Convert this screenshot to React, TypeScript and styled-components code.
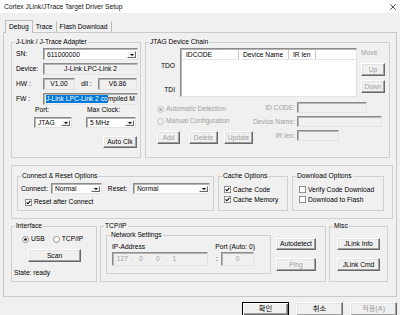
import React from "react";
import styled, { createGlobalStyle, css } from "styled-components";

const FONT = `"Liberation Sans", Arial, sans-serif`;
const KFONT = `"Liberation Sans", "Noto Sans CJK KR", sans-serif`;
const DIS = "#a0a0a0";

const Global = createGlobalStyle`
  html, body { margin: 0; padding: 0; background: #f0f0f0; }
  body { font-family: ${FONT}; font-size: 6.7px; line-height: 8px; color: #000; }
  * { box-sizing: border-box; }
`;

const Window = styled.div`
  width: 400px; height: 315px; overflow: hidden; background: #f0f0f0;
  display: flex; flex-direction: column;
`;
const TitleBar = styled.div`
  height: 13px; flex-shrink: 0; background: #fff;
  display: flex; align-items: center; justify-content: space-between;
  padding: 0 4px 0 4px;
`;
const TitleText = styled.span`white-space: nowrap; color: #111;`;

const TabStrip = styled.div`
  display: flex; align-items: flex-end; height: 13px; flex-shrink: 0;
  margin-top: 7px; margin-bottom: -1px; padding-left: 5px;
  position: relative; z-index: 1;
`;
const Tab = styled.div<{ $active?: boolean }>`
  height: 13px; padding: 0 3px; display: flex; align-items: center; white-space: nowrap;
  ${(p) =>
    p.$active
      ? css`background: #f0f0f0; border: 1px solid #bcbcbc; border-bottom: none;`
      : css`height: 11px; margin-bottom: 1px; border-right: 1px solid #bcbcbc;`}
`;

const Page = styled.div`
  margin: 0 3px; height: 265px; flex-shrink: 0;
  border: 1px solid #c9c9c9;
  padding: 5px 0 0 7px;
  display: flex; flex-direction: column;
`;

const Group = styled.fieldset<{ $w: number; $h: number }>`
  margin: 0; padding: 0; min-width: 0; flex-shrink: 0;
  width: ${(p) => p.$w}px; height: ${(p) => p.$h}px;
  border: 1px solid #d0d0d0;
`;
const Legend = styled.legend`
  margin-left: 3px; padding: 0 1px; height: 8px; line-height: 8px; white-space: nowrap;
`;

const TopRow = styled.div`display: flex; gap: 4px; flex-shrink: 0;`;

const sunken = css`
  border: 1px solid; border-color: #8c8c8c #e3e3e3 #e3e3e3 #8c8c8c;
  box-shadow: inset 1px 1px 0 #b4b4b4;
`;

const Field = styled.div<{ $w: number; $h?: number; $center?: boolean; $white?: boolean; $disabled?: boolean }>`
  width: ${(p) => p.$w}px; height: ${(p) => p.$h ?? 12}px; flex-shrink: 0;
  ${sunken};
  background: ${(p) => (p.$white ? "#fff" : "#f0f0f0")};
  color: ${(p) => (p.$disabled ? DIS : "#000")};
  display: flex; align-items: center;
  justify-content: ${(p) => (p.$center ? "center" : "flex-start")};
  padding: 0 2px; overflow: hidden; white-space: nowrap;
`;

const ComboBox = styled.div<{ $w: number; $h: number }>`
  width: ${(p) => p.$w}px; height: ${(p) => p.$h}px; flex-shrink: 0;
  ${sunken};
  background: #fff; display: flex; align-items: stretch; padding: 2px 1px 1px 2px;
`;
const ComboText = styled.span`flex: 1; overflow: hidden; white-space: nowrap; display: flex; align-items: center; padding-left: 1px;`;
const ComboArrow = styled.span`
  width: 9px; flex-shrink: 0; background: #f0f0f0;
  border: 1px solid; border-color: #fff #696969 #696969 #fff;
  display: flex; align-items: center; justify-content: center;
  &::after {
    content: ""; width: 0; height: 0;
    border-left: 2.5px solid transparent; border-right: 2.5px solid transparent;
    border-top: 2.5px solid #000;
  }
`;

function Combo({ w, h, value }: { w: number; h: number; value: string }) {
  return (
    <ComboBox $w={w} $h={h}>
      <ComboText>{value}</ComboText>
      <ComboArrow />
    </ComboBox>
  );
}

const Btn = styled.button<{ $w: number; $h: number; $mt?: number; $ml?: number; $default?: boolean; $kr?: boolean }>`
  font: inherit; margin: 0; padding: 0; cursor: default; flex-shrink: 0;
  margin-top: ${(p) => p.$mt ?? 0}px; margin-left: ${(p) => p.$ml ?? 0}px;
  width: ${(p) => p.$w}px; height: ${(p) => p.$h}px;
  display: flex; align-items: center; justify-content: center; white-space: nowrap;
  background: #f0f0f0; color: #000;
  border: 1px solid; border-color: #fff #696969 #696969 #fff;
  box-shadow: inset -1px -1px 0 #a0a0a0, inset 1px 1px 0 #e3e3e3;
  ${(p) => p.$kr && css`font-family: ${KFONT}; font-size: 7.3px;`}
  ${(p) =>
    p.$default &&
    css`
      border-color: #000;
      box-shadow: inset 1px 1px 0 #fff, inset -1px -1px 0 #696969, inset -2px -2px 0 #a0a0a0;
    `}
  &:disabled { color: ${DIS}; }
`;

/* Adapter */
const AdapterBody = styled.div`padding: 2px 3px 0 4px; display: flex; flex-direction: column;`;
const FieldRow = styled.div`
  display: flex; align-items: center; height: 12px;
  & + & { margin-top: 3px; }
`;
const RowLabel = styled.span<{ $w?: number; $center?: boolean }>`
  width: ${(p) => p.$w ?? 27}px; flex-shrink: 0; white-space: nowrap;
  text-align: ${(p) => (p.$center ? "center" : "left")};
`;
const Selected = styled.span`background: #0078d7; color: #fff;`;
const ClockRow = styled.div`display: flex; margin-top: 1px; padding-left: 18px;`;
const ClockCol = styled.div<{ $w: number }>`
  display: flex; flex-direction: column; width: ${(p) => p.$w}px;
  & + & { margin-left: 14px; }
`;
const SmallLabel = styled.span`padding-left: 1px; height: 8px; line-height: 8px; margin-bottom: 3px; white-space: nowrap;`;
const RightAlign = styled.div`display: flex; justify-content: flex-end;`;

/* JTAG */
const JtagBody = styled.div`padding-top: 2px; display: flex; flex-direction: column;`;
const ChainRow = styled.div`display: flex; height: 49px;`;
const PinLabels = styled.div`
  width: 34px; padding: 14px 5px 0 0;
  display: flex; flex-direction: column; align-items: flex-end; gap: 16px;
`;
const ListBox = styled.div`
  width: 177px; height: 49px; background: #fff;
  border: 1px solid; border-color: #8c8c8c #e3e3e3 #e3e3e3 #8c8c8c;
  box-shadow: inset 1px 1px 0 #b4b4b4;
  padding: 1px 0 0 1px;
`;
const ListHeader = styled.div`display: flex; height: 10px; border-bottom: 1px solid #e5e5e5;`;
const HeaderCell = styled.div<{ $w: number }>`
  width: ${(p) => p.$w}px; flex-shrink: 0; padding-left: 4px; line-height: 9px;
  border-right: 1px solid #c9c9c9; white-space: nowrap;
`;
const MoveCol = styled.div`width: 24px; margin-left: 4px; padding-top: 1px; display: flex; flex-direction: column;`;
const DimText = styled.span`color: ${DIS}; height: 8px; line-height: 8px; white-space: nowrap;`;
const OptionsRow = styled.div`display: flex;`;
const OptionsLeft = styled.div`width: 107px; flex-shrink: 0; padding: 7px 0 0 11px; display: flex; flex-direction: column; gap: 2px;`;
const ButtonRow = styled.div`display: flex; margin-top: 3px;`;
const FieldsGrid = styled.div`
  display: grid; grid-template-columns: 42px auto; column-gap: 2px; row-gap: 3px;
  padding-top: 5px; align-items: center; justify-items: start; align-content: start;
`;
const GridLabel = styled.span`justify-self: end; color: ${DIS}; white-space: nowrap;`;

/* Radio / Check */
const Choice = styled.div<{ $disabled?: boolean; $h?: number; $ml?: number }>`
  display: flex; align-items: center; gap: 2px; height: ${(p) => p.$h ?? 10}px;
  margin-left: ${(p) => p.$ml ?? 0}px;
  color: ${(p) => (p.$disabled ? DIS : "#000")}; white-space: nowrap;
`;
function RadioIcon({ on, disabled }: { on?: boolean; disabled?: boolean }) {
  return (
    <svg width="7" height="7" viewBox="0 0 7 7">
      <circle cx="3.5" cy="3.5" r="3" fill={disabled ? "#f0f0f0" : "#fff"} stroke={disabled ? "#b5b5b5" : "#7a7a7a"} strokeWidth="0.8" />
      {on && <circle cx="3.5" cy="3.5" r="1.3" fill={disabled ? "#9a9a9a" : "#000"} />}
    </svg>
  );
}
function CheckIcon({ on }: { on?: boolean }) {
  return (
    <svg width="7" height="7" viewBox="0 0 7 7">
      <rect x="0.4" y="0.4" width="6.2" height="6.2" fill="#fff" stroke="#7a7a7a" strokeWidth="0.8" />
      {on && <polyline points="1.6,3.4 2.9,4.8 5.4,1.9" fill="none" stroke="#000" strokeWidth="1.1" />}
    </svg>
  );
}

/* Middle frame */
const OptionsFrame = styled.div`
  margin-top: 7px; width: 382px; height: 54px; flex-shrink: 0;
  border: 1px solid #d0d0d0; padding: 6px 0 0 5px; display: flex; gap: 4px;
`;
const ConnectBody = styled.div`padding: 3px 0 0 3px; display: flex; flex-direction: column;`;
const ConnectRow = styled.div`display: flex; align-items: center; height: 11px;`;
const CheckList = styled.div<{ $pl: number; $pt: number }>`
  display: flex; flex-direction: column; gap: 1px;
  padding-left: ${(p) => p.$pl}px; padding-top: ${(p) => p.$pt}px;
`;

/* Bottom */
const BottomRow = styled.div`display: flex; gap: 3px; margin-top: 3px; flex-shrink: 0;`;
const InterfaceBody = styled.div`padding: 5px 0 0 2px; display: flex; flex-direction: column;`;
const RadioRow = styled.div`display: flex; padding-left: 8px;`;
const StateText = styled.span`margin-top: 7px; height: 8px; white-space: nowrap;`;
const TcpBody = styled.div`display: flex;`;
const NetGroupWrap = styled.div`margin: 1px 0 0 5px;`;
const NetBody = styled.div`padding: 4px 0 0 5px;`;
const NetGrid = styled.div`
  display: grid; grid-template-columns: 96px 6px 41px; row-gap: 1px; align-items: center;
`;
const NetLabel = styled.span<{ $end?: boolean }>`
  height: 8px; line-height: 8px; white-space: nowrap;
  ${(p) => p.$end && css`grid-column: 3; justify-self: end;`}
`;
const PortWrap = styled.div`
  grid-column: 2 / 4; display: flex; align-items: center; justify-content: space-between;
  padding-left: 8px; padding-right: 1px;
`;
const Colon = styled.span`line-height: 8px;`;
const IpText = styled.span`color: ${DIS}; white-space: pre;`;
const BtnCol = styled.div<{ $ml: number }>`
  display: flex; flex-direction: column; padding-top: 8px; margin-left: ${(p) => p.$ml}px;
`;

const Footer = styled.div`
  display: flex; justify-content: flex-end; gap: 7px; padding: 5px 3px 0 0;
`;

function CloseIcon() {
  return (
    <svg width="6" height="6" viewBox="0 0 6 6">
      <path d="M0.3 0.3 L5.7 5.7 M5.7 0.3 L0.3 5.7" stroke="#222" strokeWidth="0.8" />
    </svg>
  );
}

export default function App() {
  return (
    <>
      <Global />
      <Window>
        <TitleBar>
          <TitleText>Cortex JLink/JTrace Target Driver Setup</TitleText>
          <CloseIcon />
        </TitleBar>
        <TabStrip>
          <Tab $active>Debug</Tab>
          <Tab>Trace</Tab>
          <Tab>Flash Download</Tab>
        </TabStrip>
        <Page>
          <TopRow>
            <Group $w={130} $h={120}>
              <Legend>J-Link / J-Trace Adapter</Legend>
              <AdapterBody>
                <FieldRow>
                  <RowLabel>SN:</RowLabel>
                  <Combo w={95} h={12} value="611000000" />
                </FieldRow>
                <FieldRow>
                  <RowLabel>Device:</RowLabel>
                  <Field $w={95} $center>J-Link LPC-Link 2</Field>
                </FieldRow>
                <FieldRow>
                  <RowLabel>HW :</RowLabel>
                  <Field $w={32} $center>V1.00</Field>
                  <RowLabel $w={23} $center>dll :</RowLabel>
                  <Field $w={39} $center>V6.86</Field>
                </FieldRow>
                <FieldRow>
                  <RowLabel>FW :</RowLabel>
                  <Field $w={95}>
                    <Selected>J-Link LPC-Link 2 co</Selected>mpiled M
                  </Field>
                </FieldRow>
                <ClockRow>
                  <ClockCol $w={38}>
                    <SmallLabel>Port:</SmallLabel>
                    <Combo w={38} h={11} value="JTAG" />
                  </ClockCol>
                  <ClockCol $w={50}>
                    <SmallLabel>Max Clock:</SmallLabel>
                    <Combo w={50} h={11} value="5 MHz" />
                  </ClockCol>
                </ClockRow>
                <RightAlign>
                  <Btn $w={34} $h={12} $mt={8}>Auto Clk</Btn>
                </RightAlign>
              </AdapterBody>
            </Group>

            <Group $w={245} $h={120}>
              <Legend>JTAG Device Chain</Legend>
              <JtagBody>
                <ChainRow>
                  <PinLabels>
                    <span>TDO</span>
                    <span>TDI</span>
                  </PinLabels>
                  <ListBox>
                    <ListHeader>
                      <HeaderCell $w={57}>IDCODE</HeaderCell>
                      <HeaderCell $w={50}>Device Name</HeaderCell>
                      <HeaderCell $w={27}>IR len</HeaderCell>
                    </ListHeader>
                  </ListBox>
                  <MoveCol>
                    <DimText>Move</DimText>
                    <Btn $w={24} $h={13} $mt={6} disabled>Up</Btn>
                    <Btn $w={24} $h={13} $mt={4} disabled>Down</Btn>
                  </MoveCol>
                </ChainRow>
                <OptionsRow>
                  <OptionsLeft>
                    <Choice $disabled>
                      <RadioIcon on disabled />
                      Automatic Detection
                    </Choice>
                    <Choice $disabled>
                      <RadioIcon disabled />
                      Manual Configuration
                    </Choice>
                    <ButtonRow>
                      <Btn $w={23} $h={13} disabled>Add</Btn>
                      <Btn $w={29} $h={13} $ml={9} disabled>Delete</Btn>
                      <Btn $w={29} $h={13} $ml={6} disabled>Update</Btn>
                    </ButtonRow>
                  </OptionsLeft>
                  <FieldsGrid>
                    <GridLabel>ID CODE:</GridLabel>
                    <Field $w={70} $h={11} />
                    <GridLabel>Device Name:</GridLabel>
                    <Field $w={85} $h={11} />
                    <GridLabel>IR len:</GridLabel>
                    <Field $w={42} $h={11} />
                  </FieldsGrid>
                </OptionsRow>
              </JtagBody>
            </Group>
          </TopRow>

          <OptionsFrame>
            <Group $w={197} $h={39}>
              <Legend>Connect &amp; Reset Options</Legend>
              <ConnectBody>
                <ConnectRow>
                  <RowLabel $w={30}>Connect:</RowLabel>
                  <Combo w={51} h={11} value="Normal" />
                  <RowLabel $w={31} $center>Reset:</RowLabel>
                  <Combo w={77} h={11} value="Normal" />
                </ConnectRow>
                <CheckList $pl={4} $pt={4}>
                  <Choice $h={8}>
                    <CheckIcon on />
                    Reset after Connect
                  </Choice>
                </CheckList>
              </ConnectBody>
            </Group>
            <Group $w={70} $h={39}>
              <Legend>Cache Options</Legend>
              <CheckList $pl={5} $pt={5}>
                <Choice $h={9}>
                  <CheckIcon on />
                  Cache Code
                </Choice>
                <Choice $h={9}>
                  <CheckIcon on />
                  Cache Memory
                </Choice>
              </CheckList>
            </Group>
            <Group $w={92} $h={39}>
              <Legend>Download Options</Legend>
              <CheckList $pl={6} $pt={5}>
                <Choice $h={9}>
                  <CheckIcon />
                  Verify Code Download
                </Choice>
                <Choice $h={9}>
                  <CheckIcon />
                  Download to Flash
                </Choice>
              </CheckList>
            </Group>
          </OptionsFrame>

          <BottomRow>
            <Group $w={86} $h={60}>
              <Legend>Interface</Legend>
              <InterfaceBody>
                <RadioRow>
                  <Choice $h={8}>
                    <RadioIcon on />
                    USB
                  </Choice>
                  <Choice $h={8} $ml={8}>
                    <RadioIcon />
                    TCP/IP
                  </Choice>
                </RadioRow>
                <Btn $w={53} $h={13} $mt={6} $ml={14}>Scan</Btn>
                <StateText>State: ready</StateText>
              </InterfaceBody>
            </Group>
            <Group $w={226} $h={60}>
              <Legend>TCP/IP</Legend>
              <TcpBody>
                <NetGroupWrap>
                  <Group $w={165} $h={43}>
                    <Legend>Network Settings</Legend>
                    <NetBody>
                      <NetGrid>
                        <NetLabel>IP-Address</NetLabel>
                        <NetLabel $end>Port (Auto: 0)</NetLabel>
                        <Field $w={96} $h={14}>
                          <IpText>{" 127  .   0   .   0   .   1"}</IpText>
                        </Field>
                        <PortWrap>
                          <Colon>:</Colon>
                          <Field $w={33} $h={14} $center $disabled>0</Field>
                        </PortWrap>
                      </NetGrid>
                    </NetBody>
                  </Group>
                </NetGroupWrap>
                <BtnCol $ml={5}>
                  <Btn $w={40} $h={12}>Autodetect</Btn>
                  <Btn $w={40} $h={13} $mt={8} disabled>Ping</Btn>
                </BtnCol>
              </TcpBody>
            </Group>
            <Group $w={59} $h={60}>
              <Legend>Misc</Legend>
              <BtnCol $ml={7}>
                <Btn $w={43} $h={12}>JLink Info</Btn>
                <Btn $w={43} $h={13} $mt={8}>JLink Cmd</Btn>
              </BtnCol>
            </Group>
          </BottomRow>
        </Page>
        <Footer>
          <Btn $w={47} $h={14} $kr $default>확인</Btn>
          <Btn $w={47} $h={14} $kr>취소</Btn>
          <Btn $w={47} $h={14} $kr disabled>적용(A)</Btn>
        </Footer>
      </Window>
    </>
  );
}
